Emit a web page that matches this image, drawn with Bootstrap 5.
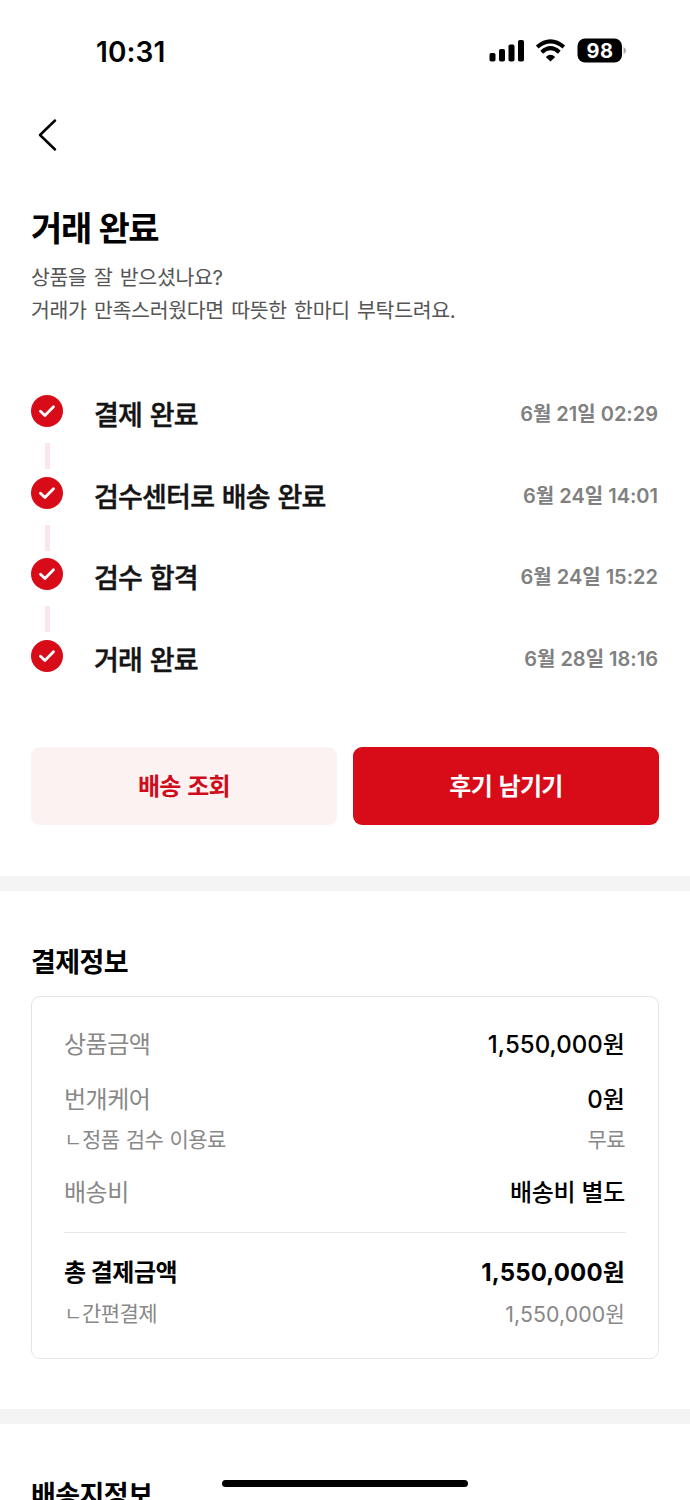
<!DOCTYPE html>
<html lang="ko">
<head>
<meta charset="utf-8">
<meta name="viewport" content="width=device-width, initial-scale=1">
<title>거래 완료</title>
<link href="https://cdn.jsdelivr.net/npm/bootstrap@5.3.0/dist/css/bootstrap.min.css" rel="stylesheet">
<style>
  body { font-family: Inter, "Noto Sans CJK KR", sans-serif; color: #000; background: #fff; font-feature-settings: "calt" 0; }
  .screen { height: 1500px; overflow: hidden; }
  .gutter { padding-left: 31px; padding-right: 31px; }
  .status { height: 100px; padding: 2px 64px 0 96px; }
  .clock { font-size: 28px; font-weight: 600; letter-spacing: .1px; padding-top: 2px; }
  .topnav { height: 70px; padding-left: 37px; }
  .page-title { font-size: 34px; line-height: 50px; font-weight: 700; letter-spacing: -1.4px; word-spacing: 1px; margin: 34px 0 7px; }
  .lead-text { font-size: 20.5px; line-height: 33px; letter-spacing: -.3px; word-spacing: 1.8px; color: #555; margin: 0 0 68px; }
  .step { height: 81.6px; }
  .step:last-child { height: 32px; }
  .rail { width: 63px; }
  .rail svg { display: block; }
  .rail i { display: block; width: 5px; height: 26px; background: #fce6ea; margin: 16px 0 0 13.5px; }
  .step-name { font-size: 27px; line-height: 32px; font-weight: 500; letter-spacing: -.8px; word-spacing: 1.2px; color: #141414; padding-top: 5px; -webkit-text-stroke: .45px #141414; }
  .step-date { font-size: 20px; line-height: 32px; font-weight: 600; color: #808080; padding: 3px 1px 0 0; }
  .actions { gap: 16px; margin-top: 75px; margin-bottom: 51px; }
  .act { height: 78px; border: 0; border-radius: 9px; font-size: 24px; font-weight: 700; letter-spacing: -.7px; word-spacing: 1.5px; padding-top: 9px; }
  .act-soft, .act-soft:hover { background: #fdf2f2; color: #cf0c1c; }
  .act-main, .act-main:hover { background: #d80c18; color: #fff; }
  .band { height: 15px; background: #f4f4f4; }
  .sec-title { font-size: 27px; line-height: 40px; font-weight: 700; letter-spacing: -.55px; margin: 0; }
  .sec-pad { padding-top: 52px; }
  .bill { height: 363px; margin-top: 13px; margin-bottom: 50px; border: 1.5px solid #e5e5e5; border-radius: 9px; padding: 30px 32px 0 32px; }
  .line { font-size: 24px; line-height: 36px; letter-spacing: -.5px; color: #888; }
  .line b { font-weight: 500; color: #000; letter-spacing: -.3px; padding-right: 1px; }
  .line .amount { letter-spacing: .05px; }
  .line.total, .line.total b { font-weight: 700; color: #000; }
  .line.total .amount { letter-spacing: .15px; }
  .subline { font-size: 21px; line-height: 32px; letter-spacing: -.6px; word-spacing: 1px; color: #888; }
  .subline .amount { font-size: 21.3px; letter-spacing: .1px; }
  .subline > :last-child { padding-right: 1px; }
  .elbow { display: inline-block; width: 18px; font-size: 19px; text-align: center; line-height: 16px; }
  .rule { height: 1px; background: #e8e8e8; }
  .home { left: 222px; bottom: 13px; width: 246px; height: 7px; border-radius: 4px; background: #000; }
</style>
</head>
<body>
<div class="screen position-relative">
  <header class="status d-flex justify-content-between align-items-center">
    <span class="clock">10:31</span>
    <svg width="140" height="30" viewBox="0 0 140 30" aria-hidden="true">
      <g fill="#000">
        <rect x="3.5" y="17" width="6" height="8.500" rx="1.8"/><rect x="13" y="13" width="6" height="12.5" rx="1.8"/>
        <rect x="22.5" y="8.500" width="6" height="17" rx="1.8"/><rect x="32" y="4" width="6" height="21.500" rx="1.8"/>
        <path d="M64.500 25.500 L59.800 21 Q64.500 16.500 69.200 21Z"/>
        <rect x="91.500" y="2.500" width="44.500" height="24" rx="7.500"/>
      </g>
      <g fill="none" stroke="#000" stroke-width="4">
        <path d="M51.200 11 Q64.500 -.2 77.800 11"/><path d="M55.700 16.200 Q64.500 8.200 73.300 16.200"/>
      </g>
      <path d="M137.500 11 q2.500 1 2.500 3.500 t-2.500 3.500z" fill="#aaa"/>
      <text x="113.900" y="21.700" text-anchor="middle" font-family="Inter" font-size="20" font-weight="700" letter-spacing=".5" fill="#fff">98</text>
    </svg>
  </header>
  <nav class="topnav d-flex align-items-center" aria-label="뒤로">
    <svg width="22" height="34" viewBox="0 0 22 34" fill="none" stroke="#000" stroke-width="2.500" stroke-linecap="round" stroke-linejoin="round"><path d="M18 2.500 3 17 18 31.500"/></svg>
  </nav>

  <main>
    <section class="gutter">
      <h1 class="page-title">거래 완료</h1>
      <p class="lead-text">상품을 잘 받으셨나요?<br>거래가 만족스러웠다면 따뜻한 한마디 부탁드려요.</p>
      <div class="step d-flex"><div class="rail"><svg width="32" height="32" viewBox="0 0 32 32"><circle cx="16" cy="16" r="16" fill="#d80c18"/><path d="M9.500 16.300 13.900 20.500 22.500 11.800" fill="none" stroke="#fff" stroke-width="2.800" stroke-linecap="round" stroke-linejoin="round"/></svg><i></i></div><span class="step-name">결제 완료</span><span class="step-date ms-auto">6월 21일 02:29</span></div>
      <div class="step d-flex"><div class="rail"><svg width="32" height="32" viewBox="0 0 32 32"><circle cx="16" cy="16" r="16" fill="#d80c18"/><path d="M9.500 16.300 13.900 20.500 22.500 11.800" fill="none" stroke="#fff" stroke-width="2.800" stroke-linecap="round" stroke-linejoin="round"/></svg><i></i></div><span class="step-name">검수센터로 배송 완료</span><span class="step-date ms-auto">6월 24일 14:01</span></div>
      <div class="step d-flex"><div class="rail"><svg width="32" height="32" viewBox="0 0 32 32"><circle cx="16" cy="16" r="16" fill="#d80c18"/><path d="M9.500 16.300 13.900 20.500 22.500 11.800" fill="none" stroke="#fff" stroke-width="2.800" stroke-linecap="round" stroke-linejoin="round"/></svg><i></i></div><span class="step-name">검수 합격</span><span class="step-date ms-auto">6월 24일 15:22</span></div>
      <div class="step d-flex"><div class="rail"><svg width="32" height="32" viewBox="0 0 32 32"><circle cx="16" cy="16" r="16" fill="#d80c18"/><path d="M9.500 16.300 13.900 20.500 22.500 11.800" fill="none" stroke="#fff" stroke-width="2.800" stroke-linecap="round" stroke-linejoin="round"/></svg></div><span class="step-name">거래 완료</span><span class="step-date ms-auto">6월 28일 18:16</span></div>
    </section>
    <div class="gutter"><div class="actions d-flex">
      <button class="btn act act-soft flex-fill w-50">배송 조회</button>
      <button class="btn act act-main flex-fill w-50">후기 남기기</button>
    </div></div>
    <div class="band"></div>

    <section class="gutter sec-pad">
      <h2 class="sec-title">결제정보</h2>
      <div class="bill">
        <div class="line d-flex justify-content-between"><span>상품금액</span><b class="amount">1,550,000원</b></div>
        <div class="line d-flex justify-content-between" style="margin-top:19px"><span>번개케어</span><b class="amount">0원</b></div>
        <div class="subline d-flex justify-content-between" style="margin-top:6px"><span><span class="elbow">ㄴ</span>정품 검수 이용료</span><span>무료</span></div>
        <div class="line d-flex justify-content-between" style="margin-top:19px"><span>배송비</span><b>배송비 별도</b></div>
        <div class="rule" style="margin-top:21px"></div>
        <div class="line total d-flex justify-content-between" style="margin-top:22px"><span>총 결제금액</span><b class="amount">1,550,000원</b></div>
        <div class="subline d-flex justify-content-between" style="margin-top:7px"><span><span class="elbow">ㄴ</span>간편결제</span><span class="amount">1,550,000원</span></div>
      </div>
    </section>
    <div class="band"></div>
    <section class="gutter sec-pad"><h2 class="sec-title">배송지정보</h2></section>
  </main>
  <div class="home position-absolute"></div>
</div>
<script src="https://cdn.jsdelivr.net/npm/bootstrap@5.3.0/dist/js/bootstrap.bundle.min.js"></script>
</body>
</html>
